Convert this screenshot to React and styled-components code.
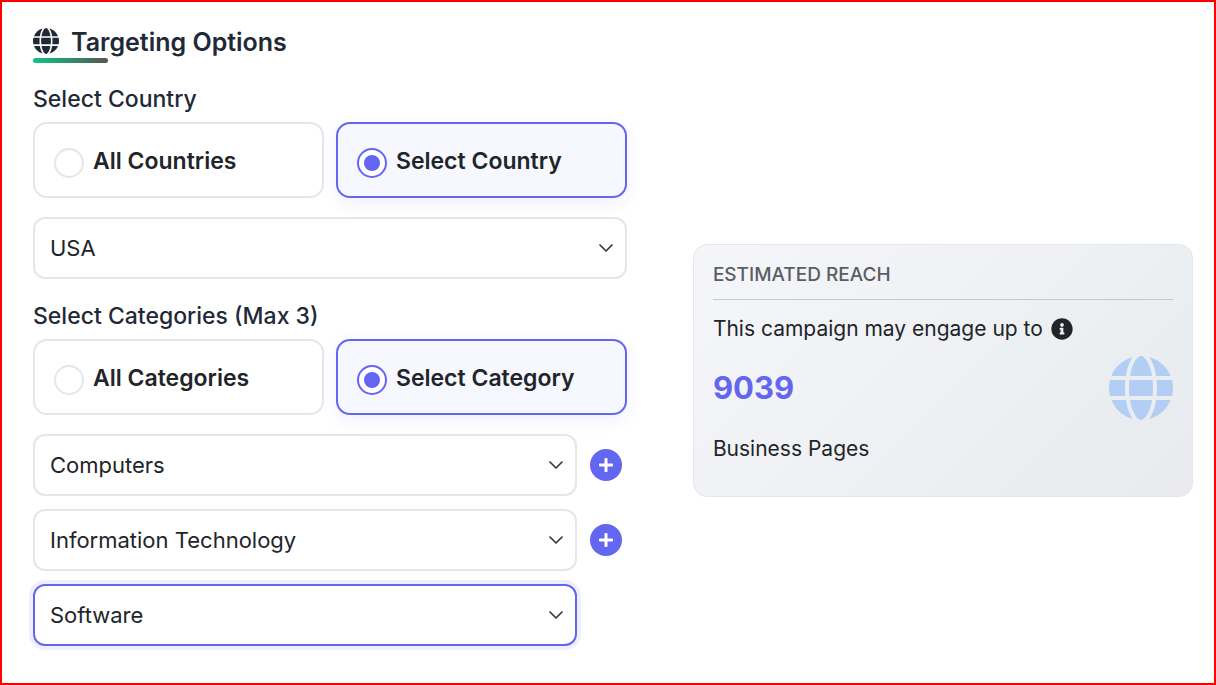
import React, { useState } from "react";
import styled, { createGlobalStyle } from "styled-components";
import { FaInfoCircle, FaPlus } from "react-icons/fa";
import { FaGlobe } from "react-icons/fa6";

const GlobalStyle = createGlobalStyle`
  * {
    box-sizing: border-box;
  }

  body {
    margin: 0;
    background: #fff;
    color: #212529;
    font-family: Inter, "Liberation Sans", sans-serif;
    font-size: 22px;
  }
`;

const Page = styled.main`
  min-height: 100vh;
  padding: 26px 21px 36px 31px;
  border: 2px solid #ff0000;
`;

const TitleBlock = styled.header`
  margin-bottom: 22px;

  &::after {
    content: "";
    display: block;
    width: 75px;
    height: 5px;
    border-radius: 3px;
    background: linear-gradient(90deg, #10c484, #555);
  }
`;

const Title = styled.h1`
  display: flex;
  align-items: flex-start;
  gap: 12px;
  margin: 0 0 1px;
  color: #1f2937;
  font-size: 25px;
  font-weight: 600;
  line-height: 29px;
`;

const Columns = styled.div`
  display: grid;
  grid-template-columns: minmax(0, 19fr) minmax(0, 16fr);
  column-gap: 66px;
`;

const Fields = styled.form`
  display: flex;
  flex-direction: column;
  gap: 23px;
`;

const Group = styled.fieldset`
  min-width: 0;
  margin: 0;
  padding: 0;
  border: 0;
`;

const Legend = styled.legend`
  margin-bottom: 9px;
  padding: 0;
  color: #1f2937;
  font-size: 23px;
  font-weight: 500;
  line-height: 28px;
`;

const Options = styled.div`
  display: grid;
  grid-template-columns: 1fr 1fr;
  gap: 12px;
  margin-bottom: 19px;
`;

const Option = styled.label`
  display: flex;
  align-items: flex-start;
  gap: 9px;
  height: 76px;
  padding: 24px 19px;
  border: 2px solid ${(props) => (props.$active ? "#6366f1" : "#e5e5eb")};
  border-radius: 14px;
  background: ${(props) => (props.$active ? "#f7f7ff" : "#fff")};
  box-shadow: ${(props) =>
    props.$active ? "0 5px 16px rgba(99, 102, 241, 0.1)" : "none"};
  font-size: 23px;
  font-weight: 600;
  line-height: 26px;
  cursor: pointer;
`;

const Radio = styled.input`
  appearance: none;
  display: grid;
  flex: none;
  place-items: center;
  width: 30px;
  height: 30px;
  margin: 0;
  border: 2px solid #e5e5eb;
  border-radius: 50%;
  background: #fff;

  &:checked {
    border-color: #6366f1;
  }

  &:checked::before {
    content: "";
    width: 16px;
    height: 16px;
    border-radius: 50%;
    background: #6366f1;
  }
`;

const Select = styled.select`
  appearance: none;
  display: block;
  width: 100%;
  height: 62px;
  padding: 0 50px 0 15px;
  border: 2px solid ${(props) => (props.$active ? "#6366f1" : "#e5e5eb")};
  border-radius: 12px;
  outline: 0;
  background: #fff
    url("data:image/svg+xml,%3csvg xmlns='http://www.w3.org/2000/svg' viewBox='0 0 16 16'%3e%3cpath fill='none' stroke='%23343a40' stroke-linecap='round' stroke-linejoin='round' stroke-width='1.7' d='m2 5 6 6 6-6'/%3e%3c/svg%3e")
    no-repeat right 11px center / 16px 16px;
  box-shadow: ${(props) =>
    props.$active ? "0 0 0 4px rgba(99, 102, 241, 0.1)" : "none"};
  color: #212529;
  font-family: inherit;
  font-size: 22px;
`;

const Categories = styled.div`
  display: flex;
  flex-direction: column;
  gap: 13px;
`;

const CategoryRow = styled.div`
  display: grid;
  grid-template-columns: 1fr 32px;
  align-items: center;
  gap: 13px;
  padding-right: 5px;
`;

const AddButton = styled.button`
  display: flex;
  align-items: center;
  justify-content: center;
  width: 32px;
  height: 32px;
  padding: 0;
  border: 0;
  border-radius: 50%;
  background: #6366f1;
  color: #fff;
  font-size: 16px;
  cursor: pointer;
`;

const Side = styled.aside`
  display: flex;
  flex-direction: column;
  justify-content: center;
  padding-top: 9px;
`;

const Card = styled.section`
  padding: 15px 19px 32px;
  border: 1px solid #e5e5eb;
  border-radius: 14px;
  background: linear-gradient(
    135deg,
    #f5f6fa 0%,
    #f0f1f4 45%,
    #ecf0f3 60%,
    #e9edf0 80%,
    #eaeaee 100%
  );
`;

const CardTitle = styled.h2`
  margin: 0 0 14px;
  padding-bottom: 9px;
  border-bottom: 1px solid #c5c9ce;
  color: #5b5d63;
  font-size: 19px;
  font-weight: 500;
  line-height: 30px;
  text-transform: uppercase;
`;

const CardText = styled.p`
  display: flex;
  align-items: center;
  gap: 8px;
  margin: 0;
  font-size: 21px;
  line-height: 30px;
`;

const Reach = styled.div`
  display: flex;
  align-items: center;
  justify-content: space-between;
  margin: 12px 0 14px;
  color: #b2cef5;
  font-size: 64px;
`;

const Count = styled.strong`
  color: #6366f1;
  font-size: 31px;
  font-weight: 700;
  line-height: 40px;
`;

const industries = ["Computers", "Information Technology", "Software"];

function Choice({ name, value, selected, onSelect }) {
  return (
    <Option $active={selected === value}>
      <Radio
        type="radio"
        name={name}
        checked={selected === value}
        onChange={() => onSelect(value)}
      />
      {value}
    </Option>
  );
}

function App() {
  const [countryMode, setCountryMode] = useState("Select Country");
  const [categoryMode, setCategoryMode] = useState("Select Category");
  const [categories, setCategories] = useState(industries);
  const [active, setActive] = useState(2);

  const categoryHandler = (index, value) => {
    setCategories(categories.map((c, i) => (i === index ? value : c)));
  };

  return (
    <Page>
      <GlobalStyle />
      <TitleBlock>
        <Title>
          <FaGlobe size={26} />
          Targeting Options
        </Title>
      </TitleBlock>
      <Columns>
        <Fields>
          <Group>
            <Legend>Select Country</Legend>
            <Options>
              {["All Countries", "Select Country"].map((value) => (
                <Choice
                  key={value}
                  name="country-mode"
                  value={value}
                  selected={countryMode}
                  onSelect={setCountryMode}
                />
              ))}
            </Options>
            <Select aria-label="Country" defaultValue="USA">
              <option>USA</option>
            </Select>
          </Group>
          <Group>
            <Legend>Select Categories (Max 3)</Legend>
            <Options>
              {["All Categories", "Select Category"].map((value) => (
                <Choice
                  key={value}
                  name="category-mode"
                  value={value}
                  selected={categoryMode}
                  onSelect={setCategoryMode}
                />
              ))}
            </Options>
            <Categories>
              {categories.map((category, index) => (
                <CategoryRow key={index}>
                  <Select
                    aria-label={`Category ${index + 1}`}
                    value={category}
                    $active={active === index}
                    onFocus={() => setActive(index)}
                    onChange={(e) => categoryHandler(index, e.target.value)}
                  >
                    {industries.map((name) => (
                      <option key={name}>{name}</option>
                    ))}
                  </Select>
                  {index < 2 ? (
                    <AddButton type="button" aria-label="Add category">
                      <FaPlus />
                    </AddButton>
                  ) : null}
                </CategoryRow>
              ))}
            </Categories>
          </Group>
        </Fields>
        <Side>
          <Card>
            <CardTitle>Estimated Reach</CardTitle>
            <CardText>
              This campaign may engage up to
              <FaInfoCircle size={22} />
            </CardText>
            <Reach>
              <Count>9039</Count>
              <FaGlobe />
            </Reach>
            <CardText>Business Pages</CardText>
          </Card>
        </Side>
      </Columns>
    </Page>
  );
}

export default App;
